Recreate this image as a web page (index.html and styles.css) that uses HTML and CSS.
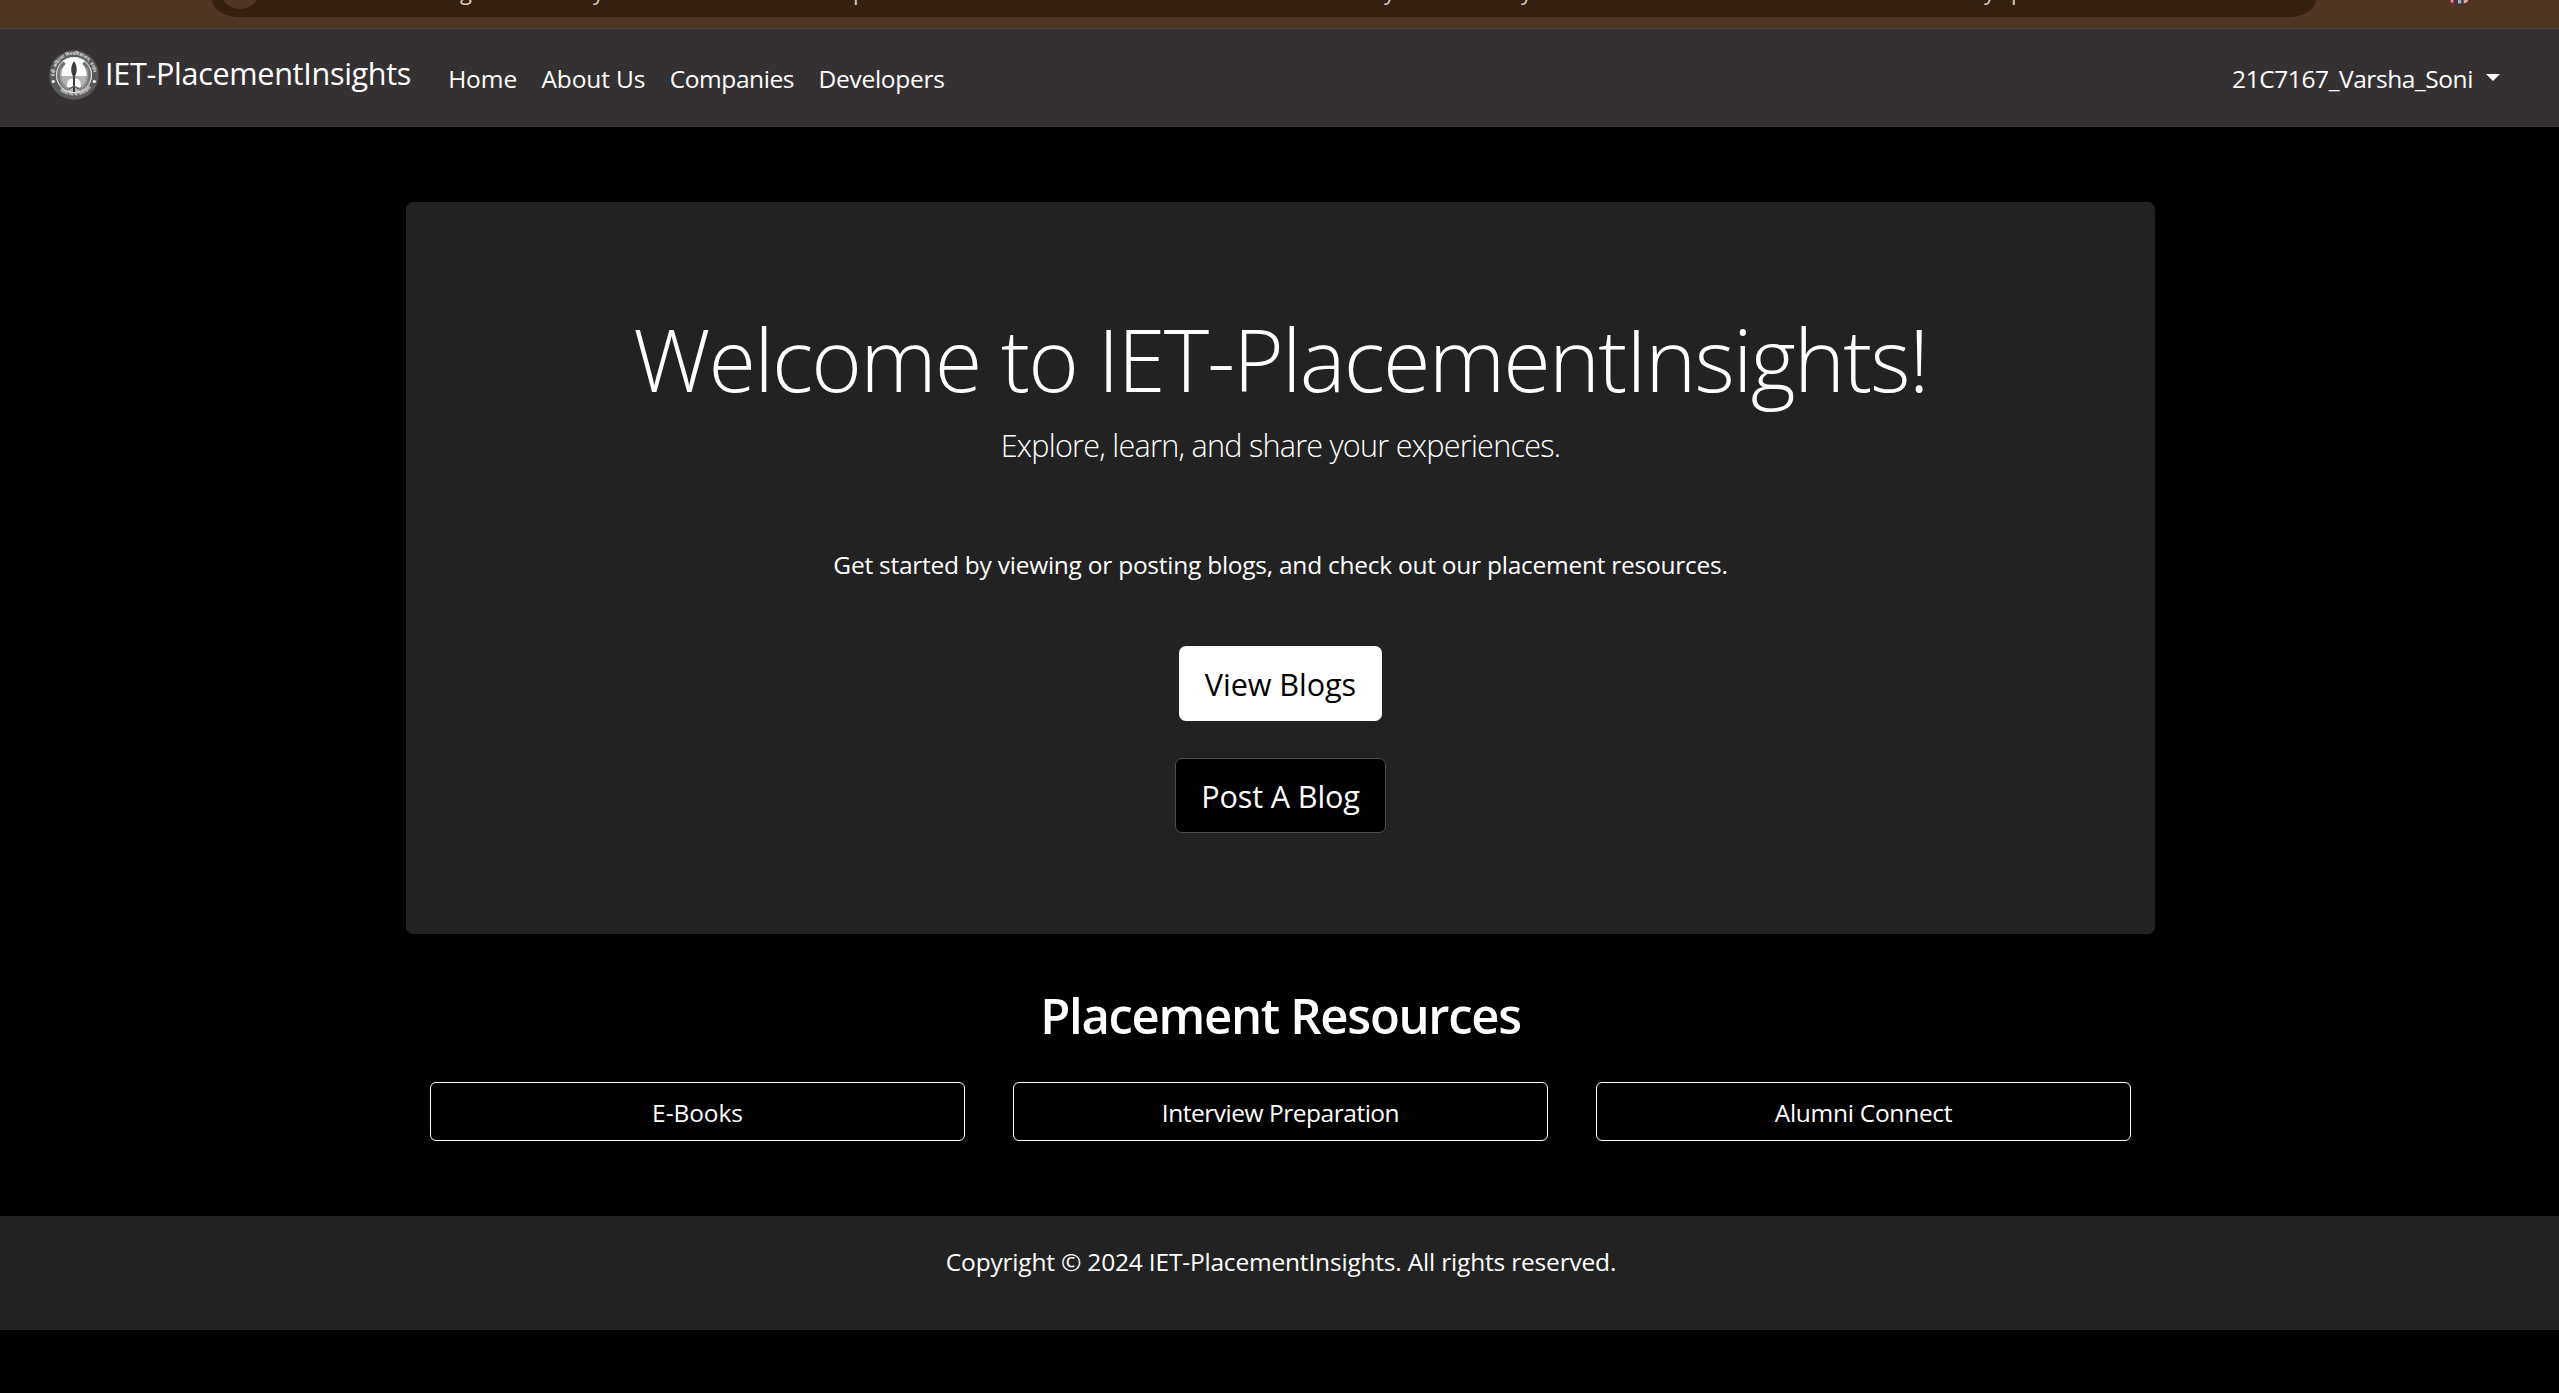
FILE: index.html
```html
<!DOCTYPE html>
<html lang="en">
<head>
<meta charset="utf-8">
<title>IET-PlacementInsights</title>
<link rel="stylesheet" href="styles.css">
</head>
<body>
<div class="browser-bar">
  <div class="address">
    <span class="site-info"></span>
    <span class="glyph g1">g</span><span class="glyph g2">y</span><span class="glyph g3">p</span><span class="glyph g4">y</span><span class="glyph g5">y</span><span class="glyph g6">y</span><span class="glyph g7">p</span>
  </div>
  <svg class="avatar" width="22" height="7" viewBox="0 0 18 6"><path d="M1 0h6v5L4 4 1 2z" fill="#a02630"/><path d="M2 0h2v2H2z" fill="#d9a3a0"/><path d="M5 0h9l-2 4-4 1.500L5 4z" fill="#35353b"/><path d="M8 0h3v3H8z" fill="#a9a9b2"/><path d="M13 0h4l-1 2-3 1z" fill="#e0a58d"/></svg>
</div>

<nav class="navbar">
  <a class="brand">
    <svg class="logo" viewBox="0 0 50 50" width="50" height="50">
      <defs>
        <path id="arc-top" d="M6.2 28A19.2 19.2 0 1 1 43.8 28"/>
        <path id="arc-bottom" d="M7.5 37A21.7 21.7 0 0 0 42.5 37"/>
      </defs>
      <circle cx="25" cy="25" r="24.7" fill="#5a5a5a"/>
      <circle cx="25" cy="25" r="18" fill="#fff"/>
      <path d="M8 26h34a17 17 0 0 1-34 0z" fill="#b4b4b4"/>
      <path d="M15 12C7 20 8 35 19 41M35 12C43 20 42 35 31 41" fill="none" stroke="#777" stroke-width="5"/>
      <path d="M12.500 18C10 26 12 34 18 39M37.500 18C40 26 38 34 32 39" fill="none" stroke="#aaa" stroke-width="1"/>
      <circle cx="25" cy="25" r="17.500" fill="none" stroke="#e4e4e4" stroke-width="1"/>
      <path d="M18 37c0-6 2-9 6-8v9zM32 37c0-6-2-9-6-8v9z" fill="#fff"/>
      <path d="M25 11c3.500 5 3.500 11 1 15v16h-2V26C21.500 22 21.500 16 25 11z" fill="#3c3c3c"/>
      <path d="M20 39l5-3 5 3" fill="none" stroke="#666" stroke-width="1.500"/>
      <circle cx="4.300" cy="31.500" r="1.500" fill="#fff"/>
      <circle cx="45.300" cy="31.500" r="1.500" fill="#fff"/>
      <text class="seal"><textPath href="#arc-top" startOffset="2">देवी अहिल्या विश्वविद्यालय, इन्दौर</textPath></text>
      <text class="seal"><textPath href="#arc-bottom" startOffset="5">धियो यो नः प्रचोदयात्</textPath></text>
    </svg>
    <span class="brand-name">IET-PlacementInsights</span>
  </a>
  <div class="links">
    <a class="home">Home</a>
    <a class="about">About Us</a>
    <a class="companies">Companies</a>
    <a class="developers">Developers</a>
  </div>
  <a class="user">21C7167_Varsha_Soni<span class="caret"></span></a>
</nav>

<main>
  <section class="hero">
    <h1>Welcome to IET-PlacementInsights!</h1>
    <p class="lead">Explore, learn, and share your experiences.</p>
    <p class="intro">Get started by viewing or posting blogs, and check out our placement resources.</p>
    <a class="btn btn-view">View Blogs</a>
    <a class="btn btn-post">Post A Blog</a>
  </section>
  <section class="resources">
    <h2>Placement Resources</h2>
    <div class="resource-grid">
      <a class="resource ebooks">E-Books</a>
      <a class="resource interview">Interview Preparation</a>
      <a class="resource alumni">Alumni Connect</a>
    </div>
  </section>
</main>

<footer>Copyright © 2024 IET-PlacementInsights. All rights reserved.</footer>
</body>
</html>
```
FILE: styles.css
```css
* { box-sizing: border-box; }
body {
  margin: 0;
  background: #000;
  color: #fff;
  font: 400 24.5px/38px "Open Sans", "Noto Sans", sans-serif;
}
h1, h2, p { margin: 0; white-space: nowrap; }

/* Browser toolbar edge */
.browser-bar {
  position: relative;
  height: 29px;
  overflow: hidden;
  background: #4e3524;
  border-bottom: 1px solid #54473a;
}
.address {
  position: relative;
  width: 2104px;
  height: 17px;
  margin-left: 212px;
  overflow: hidden;
  background: #332011;
  border-radius: 0 0 28px 28px / 0 0 17px 17px;
}
.site-info {
  position: absolute;
  left: 8px;
  top: -31px;
  width: 40px;
  height: 40px;
  border-radius: 50%;
  background: #4e3524;
}
.glyph {
  position: absolute;
  top: -24px;
  font-size: 22px;
  line-height: 30px;
  color: #d8cabd;
}
.g1 { left: 248px; }
.g2 { left: 381px; }
.g3 { left: 641px; }
.g4 { left: 1172px; }
.g5 { left: 1309px; }
.g6 { left: 1772px; }
.g7 { left: 1799px; }
.avatar { position: absolute; left: 2448px; top: 0; }

/* Navigation */
.navbar {
  display: flex;
  align-items: center;
  height: 98px;
  padding: 0 59px 0 49px;
  background: #353132;
}
.brand {
  display: flex;
  gap: 6px;
  height: 50px;
  margin: -6px 37px 0 0;
}
.brand-name {
  font-size: 30.6px;
  line-height: 47px;
  letter-spacing: -0.32px;
}
.seal {
  font: 700 4.6px "Noto Sans", "Noto Sans Devanagari", sans-serif;
  fill: #ddd;
}
.links { display: flex; gap: 24.4px; padding-top: 1px; }
.home { letter-spacing: -0.07px; }
.about { letter-spacing: -0.14px; }
.companies { letter-spacing: -0.4px; }
.developers { letter-spacing: -0.28px; }
.user {
  display: flex;
  align-items: center;
  gap: 13px;
  margin-left: auto;
  padding-top: 1px;
  letter-spacing: -0.42px;
}
.caret {
  border: 7px solid transparent;
  border-top-color: #fff;
  border-bottom: 0;
  margin-bottom: 2px;
}

/* Hero */
main { padding: 75px 0 0 2px; }
.hero {
  display: flex;
  flex-direction: column;
  align-items: center;
  width: 1749px;
  height: 732px;
  margin: 0 auto;
  padding-top: 105px;
  background: #222;
  border-radius: 7px;
}
h1 {
  font-size: 86.5px;
  font-weight: 300;
  line-height: 104px;
  letter-spacing: -1.82px;
}
.lead {
  margin-top: 11px;
  font-size: 30.6px;
  font-weight: 300;
  line-height: 46px;
  letter-spacing: -0.75px;
}
.intro { margin: 78px 0 62px; letter-spacing: -0.25px; }
.btn {
  height: 75px;
  border-radius: 7px;
  font-size: 30.6px;
  line-height: 76px;
  text-align: center;
}
.btn-view {
  width: 203px;
  background: #fff;
  color: #000;
  letter-spacing: -0.06px;
}
.btn-post {
  width: 211px;
  margin-top: 37px;
  border: 1px solid #4d4d4d;
  background: #000;
  line-height: 74px;
  letter-spacing: -0.12px;
}

/* Resources */
.resources {
  width: 1749px;
  margin: 0 auto;
  padding: 51px 24px 75px;
}
h2 {
  font-size: 49px;
  font-weight: 600;
  line-height: 60px;
  letter-spacing: -1.28px;
  text-align: center;
}
.resource-grid {
  display: grid;
  grid-template-columns: repeat(3, 1fr);
  gap: 48px;
  margin-top: 37px;
}
.resource {
  height: 59px;
  border: 1px solid #fff;
  border-radius: 6px;
  line-height: 59px;
  text-align: center;
}
.ebooks { letter-spacing: -0.08px; }
.interview { letter-spacing: -0.475px; }
.alumni { letter-spacing: -0.27px; }

footer {
  height: 114px;
  padding: 27px 0 0 3px;
  background: #222;
  text-align: center;
  letter-spacing: -0.19px;
}
```
